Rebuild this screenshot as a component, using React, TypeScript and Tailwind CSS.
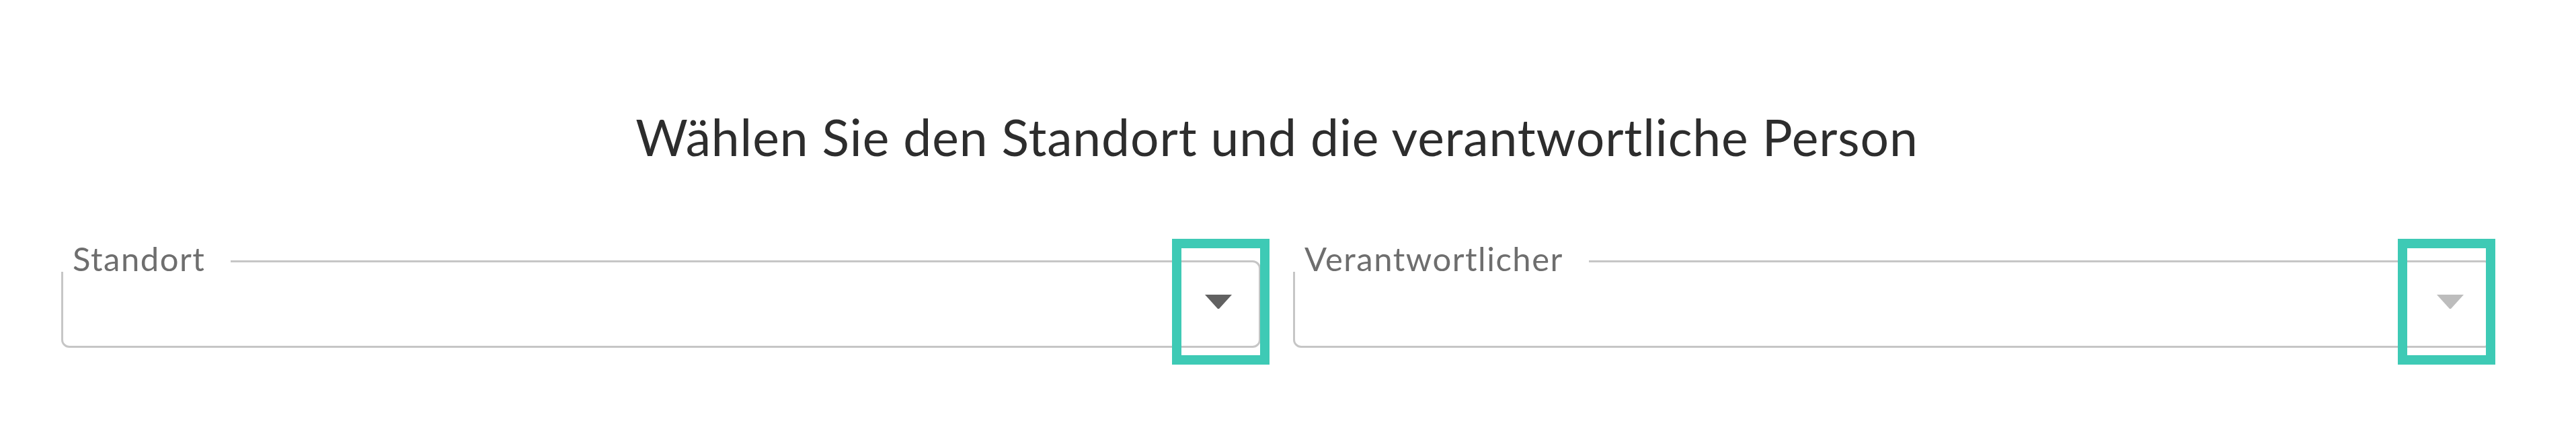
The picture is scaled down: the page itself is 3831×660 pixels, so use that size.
const FONT = { fontFamily: "Lato, 'Open Sans', sans-serif" };

type SelectFieldProps = {
  label: string;
  disabled?: boolean;
  highlight: string;
};

const Caret = ({ disabled }: { disabled?: boolean }) => (
  <svg width="40" height="21" viewBox="0 0 40 21" className={disabled ? "fill-[#bdbdbd]" : "fill-[#616161]"}>
    <polygon points="0,0 40,0 21,21 19,21" />
  </svg>
);

const SelectField = ({ label, disabled, highlight }: SelectFieldProps) => (
  <div className="relative flex h-[130px] items-center justify-end rounded-[12px] border-[3px] border-[#c6c6c6] pr-[40px] pb-[7px]">
    <span className="absolute top-[-26px] left-[-4px] bg-white pr-[38px] pl-[18px] text-[49px] leading-[40px] tracking-[1.5px] text-[#6e6e6e]">
      {label}
    </span>
    <Caret disabled={disabled} />
    <div className={`absolute top-[-35px] bottom-[-28px] w-[145px] border-[14px] border-[#3ecab5] ${highlight}`} />
  </div>
);

export default function App() {
  return (
    <div className="h-[660px] w-full bg-white pt-[158px] pr-[124px] pl-[91px]" style={FONT}>
      <h1 className="text-center text-[75px] leading-[90px] font-normal tracking-[0.9px] text-[#2d2d2d]">
        Wählen Sie den Standort und die verantwortliche Person
      </h1>
      <div className="mt-[139px] grid grid-cols-2 gap-[48px]">
        <SelectField label="Standort" highlight="right-[-16px]" />
        <SelectField label="Verantwortlicher" disabled highlight="right-[-7px]" />
      </div>
    </div>
  );
}
